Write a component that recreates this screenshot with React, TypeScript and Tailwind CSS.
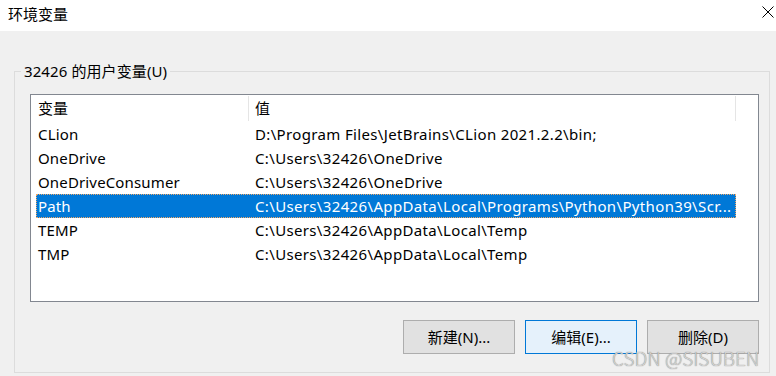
import React from "react";

const rows = [
	{ name: "CLion", value: "D:\\Program Files\\JetBrains\\CLion 2021.2.2\\bin;" },
	{ name: "OneDrive", value: "C:\\Users\\32426\\OneDrive" },
	{ name: "OneDriveConsumer", value: "C:\\Users\\32426\\OneDrive" },
	{
		name: "Path",
		value: "C:\\Users\\32426\\AppData\\Local\\Programs\\Python\\Python39\\Scr...",
		selected: true,
	},
	{ name: "TEMP", value: "C:\\Users\\32426\\AppData\\Local\\Temp" },
	{ name: "TMP", value: "C:\\Users\\32426\\AppData\\Local\\Temp" },
];

const WinButton = ({ label, focused }: { label: string; focused?: boolean }) => (
	<button
		className={[
			"w-[112px] h-[34px] border text-[15px] text-black",
			focused ? "border-[#0078d7] bg-[#e5f1fb]" : "border-[#adadad] bg-[#e1e1e1]",
		].join(" ")}
	>
		{label}
	</button>
);

export default function App() {
	return (
		<div
			className="relative w-[776px] h-[376px] overflow-hidden bg-[#f0f0f0] text-black"
			style={{ fontFamily: '"Noto Sans", "Noto Sans CJK SC", sans-serif' }}
		>
			{/* title bar */}
			<div className="h-[31px] bg-white flex items-center justify-between pl-[8px] pr-[2px]">
				<span className="text-[15px] leading-[20px] -mt-[4px]">环境变量</span>
				<svg width="12" height="12" viewBox="0 0 12 12" className="-mt-[8px]">
					<path d="M0.5 0.5 L11.5 11.5 M11.5 0.5 L0.5 11.5" stroke="#000" strokeWidth="1" />
				</svg>
			</div>

			{/* group box */}
			<fieldset className="mt-[30px] ml-[14px] mr-[6px] h-[312px] border border-[#dcdcdc] px-0 pt-[13px] pb-0">
				<legend className="ml-[6px] px-[3px] text-[15px] leading-[20px] tracking-[0.1px]">
					32426 的用户变量(U)
				</legend>

				{/* list view */}
				<div className="ml-[15px] mr-[10px] h-[208px] border border-[#828790] bg-white text-[15px]">
					<div className="flex h-[27px] items-stretch">
						<div className="w-[217px] flex items-center pl-[7px]">
							<span className="leading-[20px] -mt-[2px]">变量</span>
						</div>
						<div className="w-px bg-[#e5e5e5] my-[1px]" />
						<div className="w-[486px] flex items-center pl-[6px]">
							<span className="leading-[20px] -mt-[2px]">值</span>
						</div>
						<div className="w-px bg-[#e5e5e5] my-[1px]" />
					</div>
					<div className="ml-[5px] w-[700px]">
						{rows.map((r) => (
							<div
								key={r.name}
								className={[
									"grid grid-cols-[219px_1fr] h-[24px] items-center leading-[20px] border",
									r.selected
										? "bg-[#0078d7] text-white border-dotted border-[#f0a868]"
										: "border-transparent",
								].join(" ")}
							>
								<span className="pl-[1px] tracking-[0.15px]">{r.name}</span>
								<span className="whitespace-nowrap overflow-hidden -ml-px tracking-[0.35px]">
									{r.value}
								</span>
							</div>
						))}
					</div>
				</div>

				{/* buttons */}
				<div className="flex justify-end gap-[10px] mt-[18px] mr-[10px]">
					<WinButton label="新建(N)..." />
					<WinButton label="编辑(E)..." focused />
					<WinButton label="删除(D)" />
				</div>
			</fieldset>

			{/* watermark */}
			<div
				className="absolute left-[612px] top-[346px] text-[19px] leading-[24px] text-[#d4d4d4] font-light"
				style={{
					fontFamily: '"Noto Sans CJK SC", sans-serif',
					textShadow: "0 0 1px #666",
				}}
			>
				CSDN @SISUBEN
			</div>
		</div>
	);
}
